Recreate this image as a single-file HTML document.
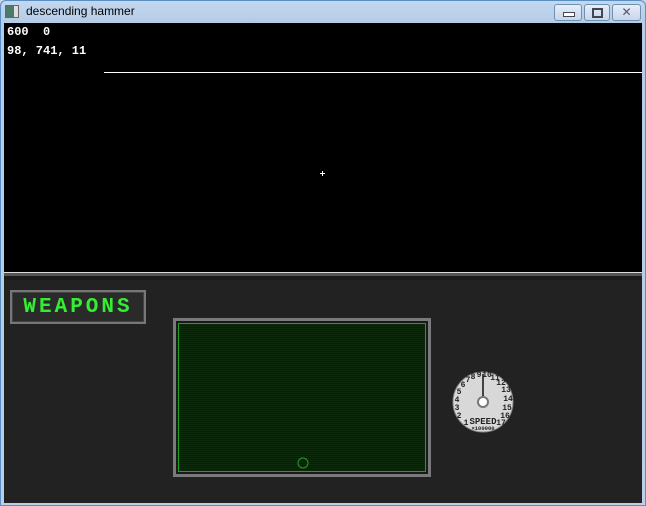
<!DOCTYPE html>
<html><head><meta charset="utf-8"><style>
html,body{margin:0;padding:0;width:646px;height:506px;overflow:hidden;background:#bcd2ea;font-family:"Liberation Sans",sans-serif}
#win{position:absolute;left:0;top:0;width:646px;height:506px;background:linear-gradient(#c4d8ef,#b5cce6 23px,#b9cfe8);}
#edge{position:absolute;left:0;top:0;width:644px;height:504px;border:1px solid #5a8fc4;border-radius:6px 6px 0 0}
#title{position:absolute;left:26px;top:4px;font-size:12px;color:#000}
#ico{position:absolute;left:5px;top:5px;width:12px;height:11px;background:#4a7a6a;border:1px solid #666;box-shadow:inset -4px 0 0 #ddd}
.btn{position:absolute;top:4px;height:15px;border:1px solid #7090b0;border-radius:3px;background:linear-gradient(#e6eef8,#c6d6ea)}
#view{position:absolute;left:4px;top:23px;width:638px;height:249px;background:#000}
.t{position:absolute;color:#fff;font:bold 12px "Liberation Mono",monospace;letter-spacing:0px}
#panel{position:absolute;left:4px;top:272px;width:638px;height:231px;background:#222}
#wp{position:absolute;left:10px;top:290px;width:132px;height:30px;border:2px solid #777;background:#2a2a2a;box-shadow:inset 0 0 0 1px #444;color:#33ee33;font:bold 21px "Liberation Mono",monospace;letter-spacing:3px;line-height:31px;text-align:center}
#radar{position:absolute;left:173px;top:318px;width:252px;height:153px;border:3px solid #7a7a7a;background:#1a1a1a}
#scr{position:absolute;left:2px;top:2px;width:246px;height:147px;border:1px solid #1fa01f;background:repeating-linear-gradient(#0d2a0d 0 1px,#062006 1px 2px)}
</style></head><body>
<div id="win"><div id="edge"></div>
<div id="ico"></div><div id="title">descending hammer</div>
<div class="btn" style="left:554px;width:26px"><div style="position:absolute;left:8px;top:7px;width:10px;height:3px;border:1px solid #445;background:#fff"></div></div>
<div class="btn" style="left:584px;width:24px"><div style="position:absolute;left:7px;top:3px;width:7px;height:6px;border:2px solid #445"></div></div>
<div class="btn" style="left:612px;width:27px;text-align:center;font-size:12px;color:#556;line-height:15px">✕</div>
<div id="view">
<div class="t" style="left:3px;top:2px">600&nbsp; 0</div>
<div class="t" style="left:3px;top:21px">98, 741, 11</div>
<div style="position:absolute;left:100px;top:49px;width:538px;height:1px;background:#fff"></div>
<div style="position:absolute;left:316px;top:150px;width:5px;height:1px;background:#fff"></div>
<div style="position:absolute;left:318px;top:148px;width:1px;height:5px;background:#fff"></div>
</div>
<div id="panel"><div style="height:1px;background:#ddd"></div><div style="height:3px;background:#555"></div><div style="height:4px;background:#1c1c1c"></div></div>
<div id="wp">WEAPONS</div>
<div id="radar"><div id="scr"><svg width="246" height="147" style="position:absolute;left:0;top:0"><circle cx="124" cy="139" r="5" fill="none" stroke="#1fa01f" stroke-width="1"/></svg></div></div>
<svg style="position:absolute;left:450px;top:368px" width="70" height="70">
<circle cx="33" cy="34" r="30" fill="#d8d8d8" stroke="#888" stroke-width="1"/>
<g font-family="Liberation Mono,monospace" font-size="8" font-weight="bold" fill="#222" text-anchor="middle">
<text x="9" y="50">2</text><text x="7" y="42">3</text><text x="7" y="34">4</text><text x="9" y="26">5</text><text x="13" y="19">6</text><text x="18" y="14">7</text><text x="23" y="11">8</text><text x="29" y="9">9</text><text x="37" y="9">10</text><text x="45" y="12">11</text><text x="51" y="17">12</text><text x="56" y="24">13</text><text x="58" y="33">14</text><text x="57" y="42">15</text><text x="55" y="50">16</text><text x="51" y="57">17</text><text x="16" y="57">1</text>
<text x="33" y="56" font-size="9">SPEED</text><text x="33" y="62" font-size="5.5">×100000</text></g>
<line x1="33" y1="34" x2="33" y2="6" stroke="#111" stroke-width="1.5"/>
<circle cx="33" cy="34" r="5" fill="#fff" stroke="#777" stroke-width="2"/>
</svg>
</div>
</body></html>
